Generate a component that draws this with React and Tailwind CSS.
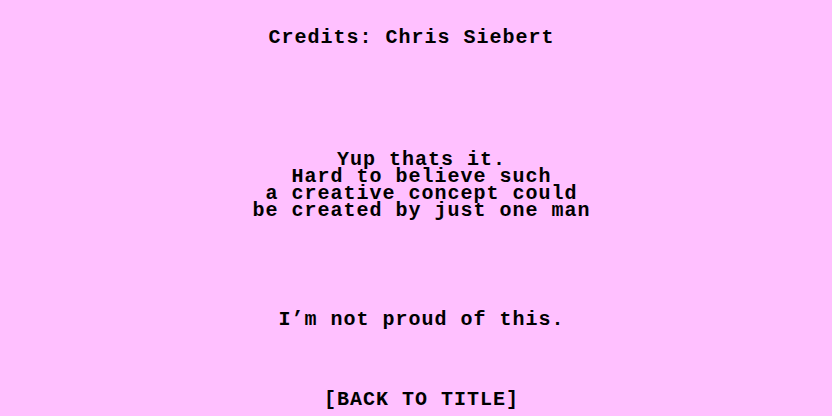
export default function App() {
    return (
        <div className="w-full h-[416px] bg-[#ffc0ff] text-black overflow-hidden flex flex-col items-center pl-[11px] pt-[29px] font-['Liberation_Mono','DejaVu_Sans_Mono',monospace] font-bold text-[20px] tracking-[1px] leading-[17px] whitespace-pre">
            {/* Header */}
            <div className="mr-[20px]">Credits: Chris Siebert</div>

            {/* Blurb */}
            <div className="mt-[105px] flex flex-col items-center">
                <div>Yup thats it.</div>
                <div>Hard to believe such</div>
                <div>a creative concept could</div>
                <div>be created by just one man</div>
            </div>

            <div className="mt-[92px]">I’m not proud of this.</div>

            <button className="mt-[63px] font-bold tracking-[1px] leading-[17px] cursor-pointer">[BACK TO TITLE]</button>
        </div>
    );
}
